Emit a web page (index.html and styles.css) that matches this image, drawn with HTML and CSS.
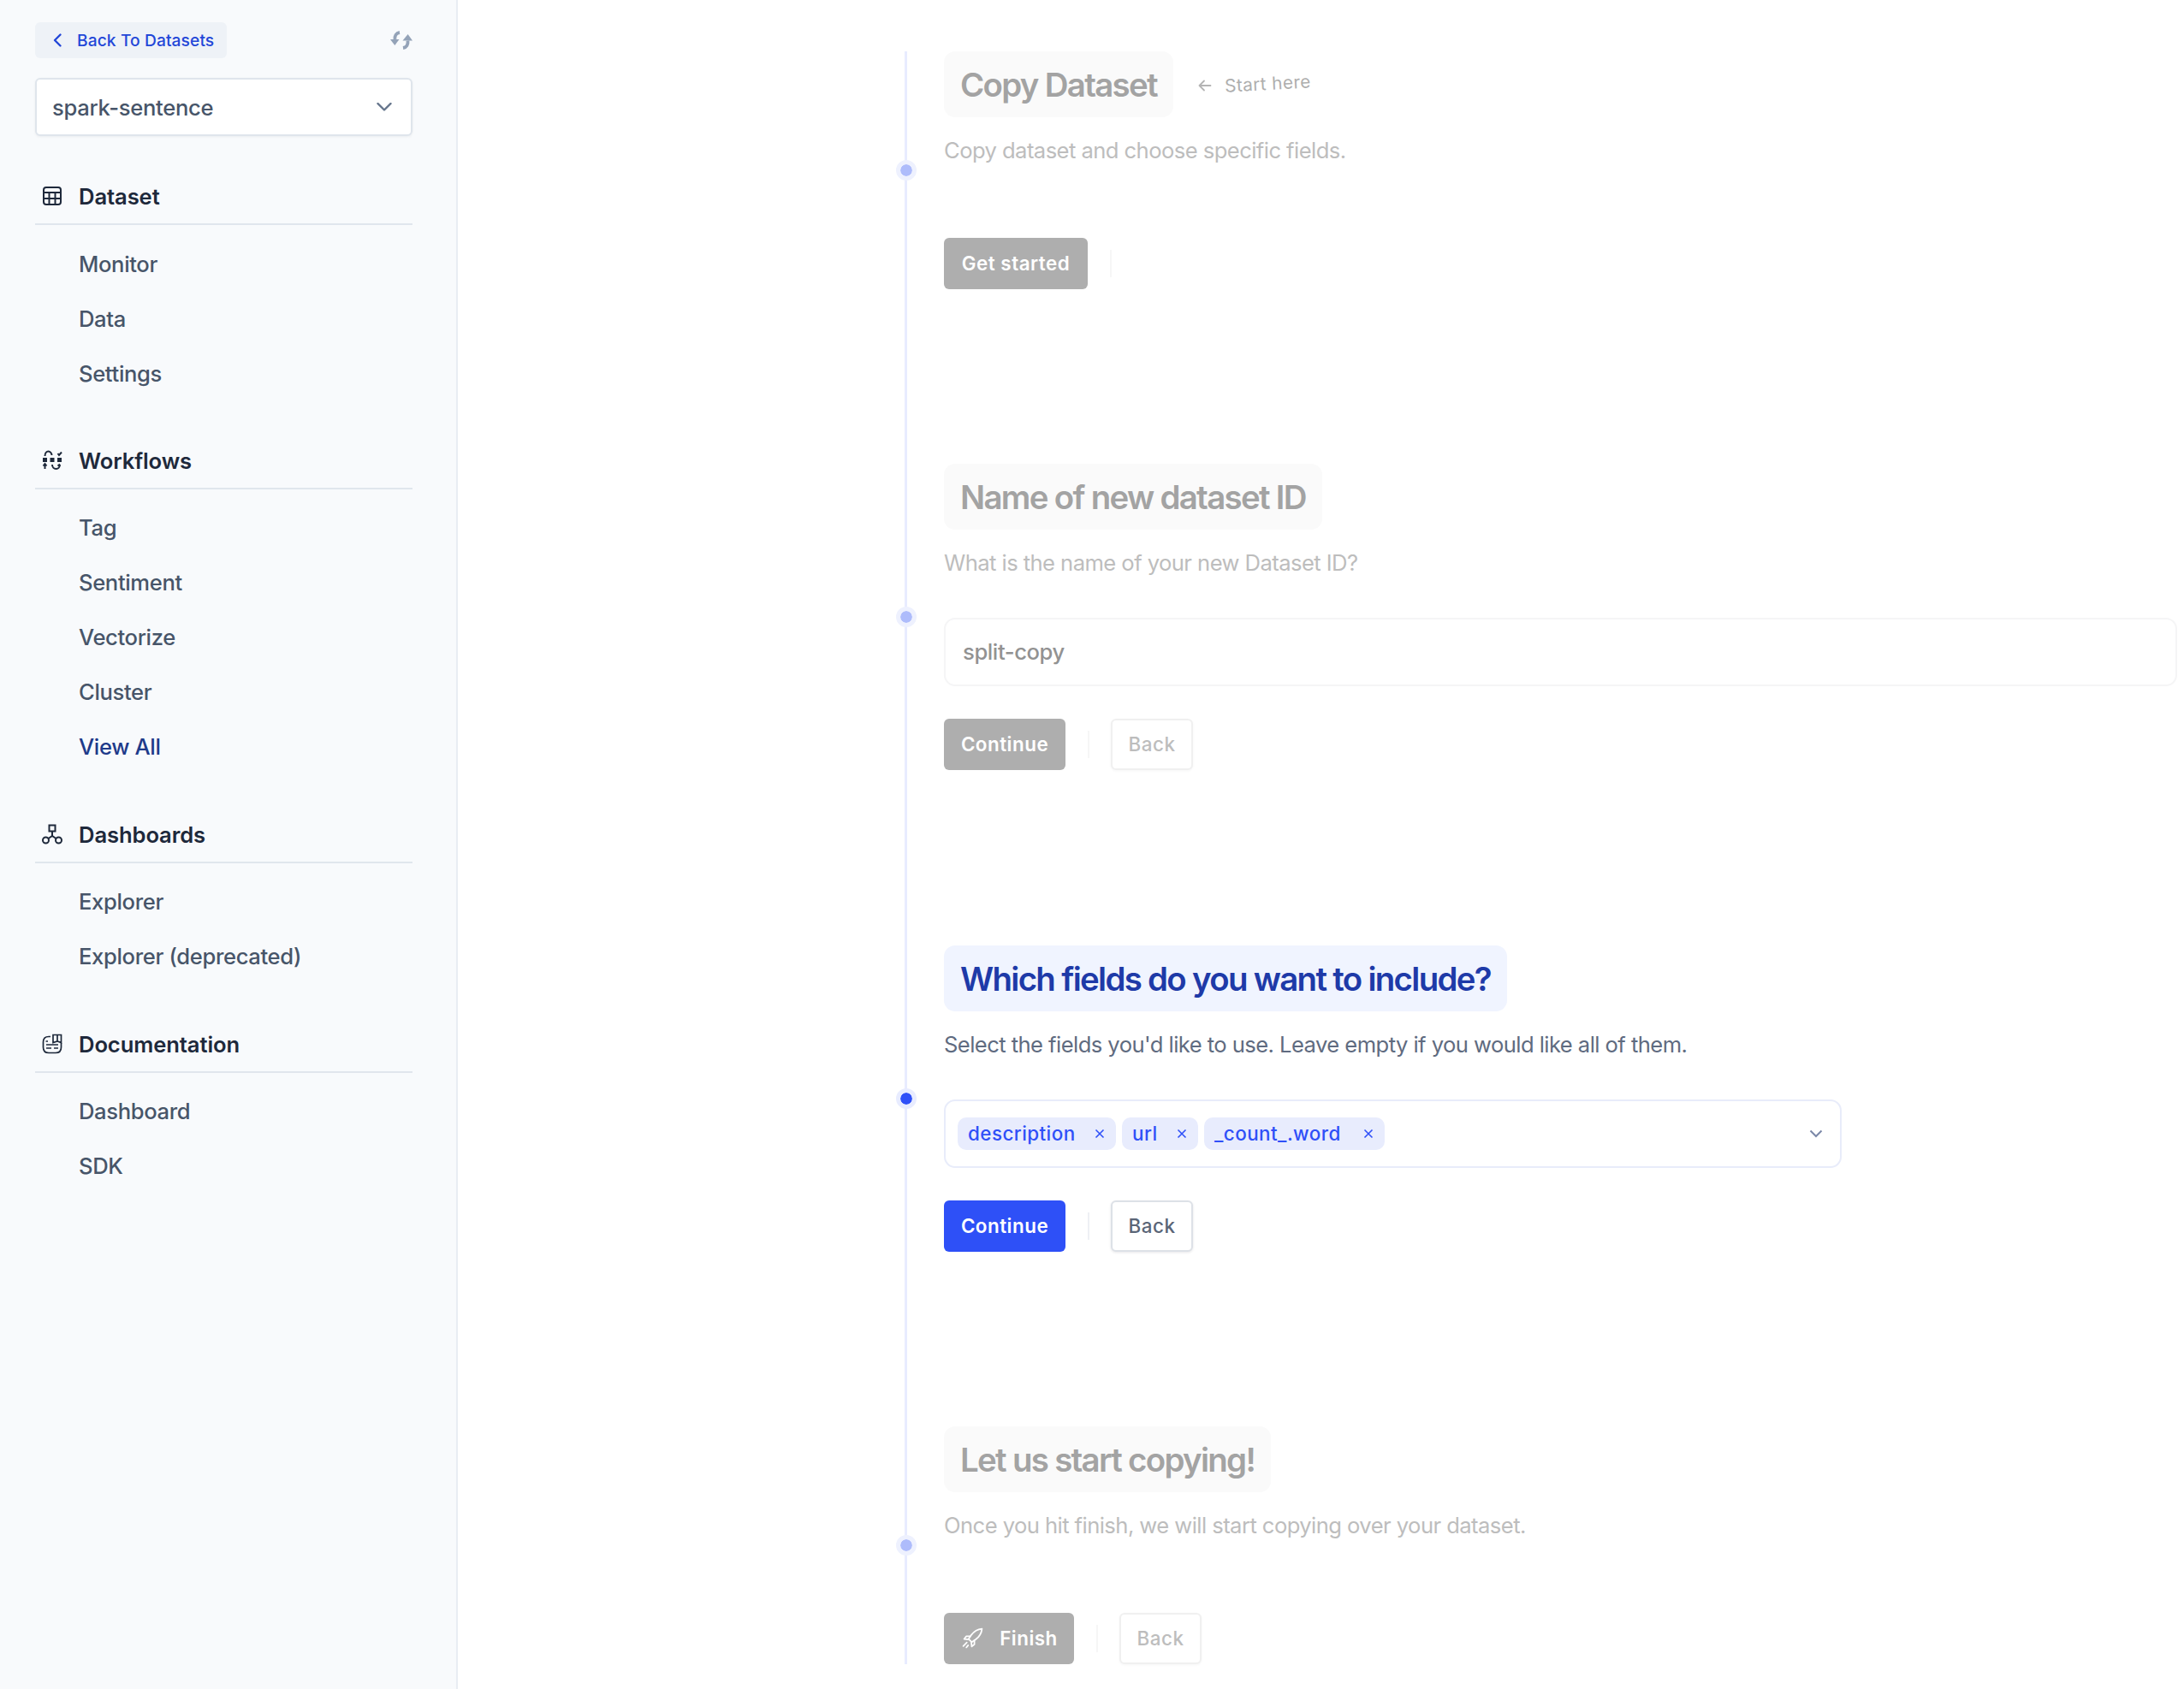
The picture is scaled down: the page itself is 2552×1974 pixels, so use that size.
FILE: index.html
```html
<!DOCTYPE html>
<html lang="en">
<head>
<meta charset="utf-8">
<title>Copy Dataset</title>
<link rel="stylesheet" href="styles.css">
</head>
<body>
<div class="app">
  <aside class="sidebar">
    <div class="top-row">
      <a class="back-link">
        <svg class="back-chevron" viewBox="0 0 12 18"><path d="M9.5 2.5 3 9l6.5 6.5"/></svg>
        <span>Back To Datasets</span>
      </a>
      <svg class="sync" viewBox="0 0 26 22">
        <path class="sync-arc" d="M11 2C6.800 2.600 5 6 5.500 10"/>
        <path class="sync-head" d="M0 10h10.500L5.300 17z"/>
        <path class="sync-arc" d="M15 20c4.200-.6 6-4 5.500-8.500"/>
        <path class="sync-head" d="M14.500 11.500h11.500L20.600 4z"/>
      </svg>
    </div>
    <div class="dataset-select">
      <span>spark-sentence</span>
      <svg class="select-chevron" viewBox="0 0 18 10"><path d="M1.500 1 9 8.500 16.500 1"/></svg>
    </div>

    <nav class="nav">
      <section class="nav-section">
        <h3 class="nav-head">
          <svg class="nav-icon" viewBox="0 0 24 24"><rect x="2" y="2" width="20" height="20" rx="3"/><path d="M2 8h20M2 15h20M8.500 8v14M15.500 8v14"/></svg>
          <span>Dataset</span>
        </h3>
        <a class="nav-item">Monitor</a>
        <a class="nav-item">Data</a>
        <a class="nav-item">Settings</a>
      </section>
      <section class="nav-section">
        <h3 class="nav-head">
          <svg class="nav-icon" viewBox="0 0 24 24"><rect class="solid" x="1" y="9" width="5" height="5"/><rect class="solid" x="9.500" y="9" width="5" height="5"/><rect class="solid" x="18" y="9" width="5" height="5"/><path d="M3.500 7C3.500 3.500 5.500 1.500 7.500 1.500S11.500 3.500 11.500 6M3.500 22v-5M1.500 18.500 3.500 16l2 2.500M12 17c0 3 2 5 4.500 5s4.500-2 4.500-5M18.500 18.500 21 16.500M18.500 4l1.500 2 3-3.500"/></svg>
          <span>Workflows</span>
        </h3>
        <a class="nav-item">Tag</a>
        <a class="nav-item">Sentiment</a>
        <a class="nav-item">Vectorize</a>
        <a class="nav-item">Cluster</a>
        <a class="nav-item view-all">View All</a>
      </section>
      <section class="nav-section">
        <h3 class="nav-head">
          <svg class="nav-icon" viewBox="0 0 24 24"><rect x="8.500" y="1.500" width="7" height="7"/><circle cx="4.500" cy="19" r="3.500"/><circle cx="19.500" cy="19" r="3.500"/><path d="M12 8.500V14M7.500 17 12 14l4.500 3"/></svg>
          <span>Dashboards</span>
        </h3>
        <a class="nav-item">Explorer</a>
        <a class="nav-item">Explorer (deprecated)</a>
      </section>
      <section class="nav-section">
        <h3 class="nav-head">
          <svg class="nav-icon nav-icon-thin" viewBox="0 0 24 24"><path d="M10 3.500H8C3.500 3.500 1.500 6 1.500 10v6c0 4 2.500 6.500 6.500 6.500h8c4 0 6.500-2.500 6.500-6.500v-5"/><path d="M13 1.500h9.500v9L18 9l-5 1.500zM18 1.500V9M4.500 9H7M5 13h14M5 17h6M14 17h5"/></svg>
          <span>Documentation</span>
        </h3>
        <a class="nav-item">Dashboard</a>
        <a class="nav-item">SDK</a>
      </section>
    </nav>
  </aside>

  <main class="main">
    <div class="timeline">

      <section class="step step-off">
        <span class="dot"></span>
        <div class="step-title-row">
          <h2 class="step-title">Copy Dataset</h2>
          <div class="start-here">
            <svg class="start-arrow" viewBox="0 0 16 16"><path d="M14.500 8h-13M7 2.500 1.500 8 7 13.500"/></svg>
            <span class="start-label">Start here</span>
          </div>
        </div>
        <p class="step-desc">Copy dataset and choose specific fields.</p>
        <div class="actions">
          <button class="btn btn-primary btn-wide">Get started</button>
          <span class="sep"></span>
        </div>
      </section>

      <section class="step step-off">
        <span class="dot"></span>
        <div class="step-title-row"><h2 class="step-title">Name of new dataset ID</h2></div>
        <p class="step-desc">What is the name of your new Dataset ID?</p>
        <div class="text-field">split-copy</div>
        <div class="actions">
          <button class="btn btn-primary">Continue</button>
          <span class="sep"></span>
          <button class="btn btn-back">Back</button>
        </div>
      </section>

      <section class="step step-on">
        <span class="dot"></span>
        <div class="step-title-row"><h2 class="step-title">Which fields do you want to include?</h2></div>
        <p class="step-desc">Select the fields you'd like to use. Leave empty if you would like all of them.</p>
        <div class="multi-select">
          <span class="chip chip-a">description<svg class="chip-x" viewBox="0 0 12 12"><path d="M1.500 1.500l9 9M10.500 1.500l-9 9"/></svg></span>
          <span class="chip chip-b">url<svg class="chip-x" viewBox="0 0 12 12"><path d="M1.500 1.500l9 9M10.500 1.500l-9 9"/></svg></span>
          <span class="chip chip-c">_count_.word<svg class="chip-x" viewBox="0 0 12 12"><path d="M1.500 1.500l9 9M10.500 1.500l-9 9"/></svg></span>
          <svg class="multi-chevron" viewBox="0 0 16 10"><path d="M1.500 1.500 8 8l6.500-6.500"/></svg>
        </div>
        <div class="actions">
          <button class="btn btn-primary">Continue</button>
          <span class="sep"></span>
          <button class="btn btn-back">Back</button>
        </div>
      </section>

      <section class="step step-off">
        <span class="dot"></span>
        <div class="step-title-row"><h2 class="step-title">Let us start copying!</h2></div>
        <p class="step-desc">Once you hit finish, we will start copying over your dataset.</p>
        <div class="actions">
          <button class="btn btn-primary btn-finish">
            <svg class="rocket" viewBox="0 0 24 24"><path d="M22.500 1.500c-5 .5-9 3-12 7L7.500 13l3.500 3.500 4.500-3c4-3 6.500-7 7-12z"/><path d="M9.500 10H5l-2.500 3 5 .5M14 14.500V19l-3 2.500-.5-5"/><path d="M5.500 17 1.500 21M7 20l-2 2.500"/></svg>
            <span>Finish</span>
          </button>
          <span class="sep"></span>
          <button class="btn btn-back">Back</button>
        </div>
      </section>

    </div>
  </main>
</div>
</body>
</html>
```

FILE: styles.css
```css
* {
  box-sizing: border-box;
}

html,
body {
  margin: 0;
  padding: 0;
  background: #ffffff;
}

body {
  font-family: Inter, "Noto Sans", "Liberation Sans", sans-serif;
  font-size: 25.6px;
  line-height: 41px;
  color: #475569;
}

.app {
  display: flex;
  min-height: 1974px;
}

/* Sidebar */
.sidebar {
  width: 535px;
  flex: none;
  padding: 26px 51px 0 41px;
  background: #f8fafc;
  border-right: 2px solid #e8edf3;
}

.top-row {
  display: flex;
  align-items: center;
  justify-content: space-between;
}

.back-link {
  display: flex;
  align-items: center;
  gap: 17px;
  width: 224px;
  height: 42px;
  padding-left: 20px;
  background: #eef2f7;
  border-radius: 6px;
  color: #2347d8;
  font-size: 19.2px;
  font-weight: 500;
  line-height: 42px;
  letter-spacing: 0.1px;
  white-space: nowrap;
}

.back-chevron {
  width: 12px;
  height: 18px;
  fill: none;
  stroke: #2347d8;
  stroke-width: 2.4;
  stroke-linecap: round;
  stroke-linejoin: round;
}

.sync {
  width: 26px;
  height: 22px;
}

.sync-arc {
  fill: none;
  stroke: #94a3b8;
  stroke-width: 3.8;
}

.sync-head {
  fill: #94a3b8;
}

.dataset-select {
  display: flex;
  align-items: center;
  justify-content: space-between;
  height: 68px;
  margin-top: 23px;
  padding: 0 22px 0 18px;
  background: #ffffff;
  border: 2px solid #dfe5ec;
  border-radius: 6px;
  box-shadow: 0 1px 3px rgba(15, 23, 42, 0.06);
  font-weight: 500;
  letter-spacing: -0.3px;
  color: #475569;
}

.select-chevron {
  width: 18px;
  height: 10px;
  fill: none;
  stroke: #64748b;
  stroke-width: 2.4;
  stroke-linecap: round;
  stroke-linejoin: round;
}

.nav {
  display: flex;
  flex-direction: column;
  gap: 39px;
  margin-top: 39px;
}

.nav-section {
  display: flex;
  flex-direction: column;
}

.nav-section:first-child {
  margin-bottom: -1px;
}

.nav-section:first-child .nav-head {
  margin-bottom: 14px;
}

.nav-head {
  display: flex;
  align-items: center;
  gap: 19px;
  height: 65px;
  margin: 0 0 13px;
  padding: 0 0 1px 8px;
  border-bottom: 2px solid #e0e6ed;
  color: #1e293b;
  font-size: 25.6px;
  font-weight: 600;
  line-height: 41px;
  letter-spacing: -0.1px;
}

.nav-icon {
  width: 24px;
  height: 24px;
  flex: none;
  fill: none;
  stroke: #1e293b;
  stroke-width: 2;
}

.nav-icon-thin {
  stroke-width: 1.7;
}

.nav-icon .solid {
  fill: #1e293b;
  stroke: none;
}

.nav-item {
  display: block;
  height: 64px;
  padding-left: 51px;
  color: #475569;
  font-weight: 500;
  line-height: 64px;
  letter-spacing: -0.35px;
}

.view-all {
  color: #1e3a8a;
}

/* Main */
.main {
  flex: 1;
  padding: 60px 0 0 522px;
}

.timeline {
  display: flex;
  flex-direction: column;
  gap: 204.3px;
  padding-left: 43px;
  border-left: 3px solid #e8ecff;
}

.step {
  position: relative;
  display: flex;
  flex-direction: column;
}

.dot {
  position: absolute;
  left: -56.500px;
  top: 50%;
  width: 24px;
  height: 24px;
  margin-top: -12px;
  border: 5px solid #e8ecff;
  border-radius: 50%;
  background: #2f50f8;
  background-clip: padding-box;
}

.step-title-row {
  display: flex;
  align-items: flex-start;
}

.step-title {
  margin: 0;
  height: 77px;
  padding: 0 19px;
  border-radius: 13px;
  font-size: 38.4px;
  font-weight: 600;
  line-height: 79px;
  letter-spacing: -1.68px;
}

.step-desc {
  height: 41px;
  margin: 18px 0 44px;
  font-size: 25.6px;
  line-height: 41px;
  letter-spacing: -0.56px;
}

.step-desc + .actions {
  margin-top: 38px;
}

.start-here {
  display: flex;
  align-items: center;
  gap: 15px;
  margin: 24px 0 0 29px;
  color: #aeaeae;
  font-size: 20.8px;
  line-height: 28px;
}

.start-arrow {
  width: 16px;
  height: 16px;
  margin-top: 3px;
  fill: none;
  stroke: #b4b4b4;
  stroke-width: 1.8;
  stroke-linecap: round;
  stroke-linejoin: round;
}

.start-label {
  transform: rotate(-3deg);
  letter-spacing: 0.4px;
}

.text-field {
  width: 1441px;
  height: 80px;
  padding-left: 20px;
  margin-bottom: 38px;
  border: 2px solid #f5f5f6;
  border-radius: 13px;
  font-size: 25.6px;
  font-weight: 500;
  line-height: 76px;
  letter-spacing: -0.4px;
}

.multi-select {
  display: flex;
  align-items: center;
  gap: 7px;
  width: 1049px;
  height: 80px;
  padding: 0 20px 0 14px;
  margin-bottom: 38px;
  border: 2px solid #e8ecfa;
  border-radius: 13px;
}

.chip {
  display: flex;
  align-items: center;
  justify-content: space-between;
  height: 38px;
  padding: 0 13px 0 12px;
  background: #e8ecfd;
  border-radius: 10px;
  color: #2f50f8;
  font-size: 22.4px;
  font-weight: 500;
  line-height: 38px;
  letter-spacing: 0.45px;
}

.chip-a {
  width: 185px;
}

.chip-b {
  width: 89px;
}

.chip-c {
  width: 211px;
}

.chip-x {
  width: 12px;
  height: 12px;
  fill: none;
  stroke: #2f50f8;
  stroke-width: 1.6;
}

.multi-chevron {
  width: 16px;
  height: 10px;
  margin-left: auto;
  fill: none;
  stroke: #7b88a8;
  stroke-width: 2;
}

.actions {
  display: flex;
  align-items: center;
}

.btn {
  height: 60px;
  margin: 0;
  border-radius: 6px;
  font-family: inherit;
  font-size: 22.4px;
  font-weight: 600;
  letter-spacing: 0.5px;
  line-height: 30px;
}

.btn-primary {
  display: flex;
  align-items: center;
  justify-content: center;
  width: 142px;
  padding: 0;
  border: 0;
  color: #ffffff;
  background: #2e50f7;
}

.btn-wide {
  width: 168px;
}

.btn-finish {
  width: 152px;
  gap: 19px;
}

.rocket {
  width: 25px;
  height: 25px;
  margin-left: 2px;
  fill: none;
  stroke: #ffffff;
  stroke-width: 1.7;
  stroke-linejoin: round;
  stroke-linecap: round;
}

.sep {
  width: 2px;
  height: 32px;
  margin: 0 25px 0 26px;
  background: #eef0f4;
}

.btn-back {
  width: 96px;
  padding: 0;
  font-weight: 500;
  background: #ffffff;
  border: 2px solid #dde1e7;
  box-shadow: 0 1px 3px rgba(15, 23, 42, 0.1);
  color: #5a6577;
}

/* Active and idle steps */
.step-on .step-title {
  background: #f0f4ff;
  color: #1e3aa8;
}

.step-on .step-desc {
  color: #5f6b80;
}

.step-off .step-title {
  background: #fafafa;
  color: #a3a3a3;
}

.step-off .step-desc {
  color: #bdbdbd;
}

.step-off .text-field {
  color: #929292;
}

.step-off .btn-primary {
  background: #aeaeae;
}

.step-off .btn-back {
  border-color: #f0f0f0;
  box-shadow: 0 1px 3px rgba(15, 23, 42, 0.04);
  color: #bdbdbd;
}

.step-off .dot {
  border-color: #eef1fe;
  background-color: #aebcfb;
}

.step-off .sep {
  background: #f6f6f6;
}
```
